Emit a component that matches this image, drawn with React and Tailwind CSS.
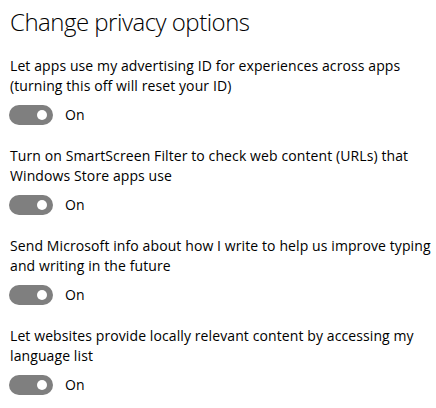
const options = [
  {
    lines: ["Let apps use my advertising ID for experiences across apps", "(turning this off will reset your ID)"],
  },
  {
    lines: ["Turn on SmartScreen Filter to check web content (URLs) that", "Windows Store apps use"],
  },
  {
    lines: ["Send Microsoft info about how I write to help us improve typing", "and writing in the future"],
  },
  {
    lines: ["Let websites provide locally relevant content by accessing my", "language list"],
  },
];

const Toggle = () => (
  <div className="flex items-center gap-[12px] -ml-[1px]">
    <div className="w-[44px] h-[20px] rounded-full bg-[#7f7f7f] flex items-center justify-end pr-[6px]">
      <div className="w-[10px] h-[10px] rounded-full bg-white" />
    </div>
    <span className="text-[14px] leading-[20px]">On</span>
  </div>
);

export default function App() {
  return (
    <div className="w-[436px] h-[408px] bg-white text-black px-[10px] pt-[6px] font-['Open_Sans',sans-serif] overflow-hidden">
      <h1 className="text-[24px] leading-[32px] font-light tracking-[-0.5px]">Change privacy options</h1>
      <div className="flex flex-col gap-[21px] mt-[18px]">
        {options.map((o, i) => (
          <div key={i} className="flex flex-col gap-[9px]">
            <p className="text-[14px] leading-[20px] whitespace-nowrap tracking-[0.1px]">
              {o.lines[0]}
              <br />
              {o.lines[1]}
            </p>
            <Toggle />
          </div>
        ))}
      </div>
    </div>
  );
}
